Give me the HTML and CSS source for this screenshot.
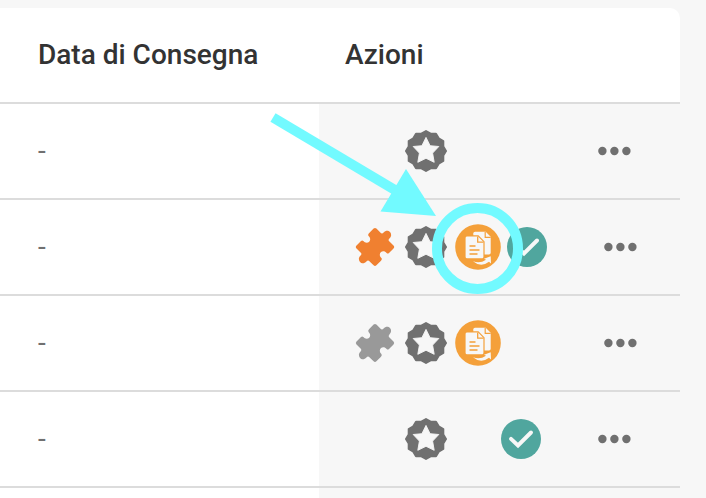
FILE: index.html
```html
<!DOCTYPE html>
<html lang="it">
<head>
<meta charset="utf-8">
<title>Consegne</title>
<link rel="stylesheet" href="styles.css">
</head>
<body>
<svg class="defs" aria-hidden="true">
  <symbol id="badge" viewBox="-21 -21 42 42">
    <path d="M20 0 17.3 4.6 17.3 10 12.7 12.7 10 17.3 4.6 17.3 0 20-4.6 17.3-10 17.3-12.7 12.7-17.3 10-17.3 4.6-20 0-17.3-4.6-17.3-10-12.7-12.7-10-17.3-4.6-17.3 0-20 4.6-17.3 10-17.3 12.7-12.7 17.3-10 17.3-4.6Z" fill="#707070" stroke="#707070" stroke-width="2" stroke-linejoin="round"/>
    <path d="M0-13.6 4.1-5.3 12.8-4.5 6.6 2.1 8.2 11.3 0 7.3-8.2 11.3-6.6 2.1-12.8-4.5-4.1-5.3Z" fill="#f7f7f7" stroke="#f7f7f7" stroke-width=".9" stroke-linejoin="round"/>
  </symbol>
  <symbol id="puzzle" viewBox="0 0 40 40">
    <path d="M18.6 1.600Q20 .2 21.400 1.600L25.600 5.800Q27 7.200 28.600 5.600C30.600 3.200 33.400 3.400 35 5.100S36.600 9.600 34.400 11.400Q32.900 12.900 34.200 14.200L38.500 18.600Q39.900 20 38.500 21.400L34 25.900Q32.700 27.100 31.600 25.900C30 23.800 27.300 23.800 25.800 25.200S24.500 29.400 26.400 31Q27.400 32.300 26 33.700L21.400 38.300Q20 39.700 18.600 38.300L14.400 34.200Q13 32.800 11.400 34.400C9.400 36.800 6.600 36.600 5 34.900S3.400 30.400 5.600 28.600Q7.100 27.100 5.800 25.800L1.500 21.400Q.1 20 1.500 18.600L6 14.100Q7.300 12.900 8.400 14.100C10 16.200 12.700 16.200 14.200 14.800S15.500 10.600 13.600 9Q12.600 7.700 14 6.300Z"/>
  </symbol>
  <symbol id="copy" viewBox="0 0 46 46">
    <circle cx="23" cy="23" r="22.800" fill="#f4a03a"/>
    <path d="M20 7.800H30.700L35.700 12.800V28.700Q35.700 30.500 34 30.500H20Q18.300 30.500 18.300 29V9.500Q18.300 7.800 20 7.800Z" fill="#f7f7f7"/>
    <path d="M30.200 8V13.400H35.700" fill="none" stroke="#f4a03a" stroke-width="1.200"/>
    <path d="M12 11.900H23.200L29 17.700V33Q29 34.900 27.200 34.900H12Q10 34.900 10 33V13.800Q10 11.900 12 11.900Z" fill="#f7f7f7" stroke="#f4a03a" stroke-width="1.200"/>
    <path d="M22.700 12.500V18.200H28.500M14.500 22H20.500M14.500 26H24.500M14.500 30H22.500" fill="none" stroke="#f4a03a" stroke-width="1.300"/>
    <path d="M18 37.300Q25 40 31 35.700L29 34.700 35.700 32.300 36 39.500 34 37.800Q26 44 18 37.300Z" fill="#f7f7f7"/>
  </symbol>
  <symbol id="check" viewBox="0 0 40 40">
    <circle cx="20" cy="20" r="20" fill="#50a69e"/>
    <path d="M10 19.800 17 26.500 30 13.500" fill="none" stroke="#f7f7f7" stroke-width="3.900" stroke-linecap="round" stroke-linejoin="miter"/>
  </symbol>
  <symbol id="dots" viewBox="0 0 34 10">
    <circle cx="5.400" cy="5" r="4.200"/><circle cx="17.400" cy="5" r="4.200"/><circle cx="29.400" cy="5" r="4.200"/>
  </symbol>
</svg>
<main class="table">
  <header class="row head"><div class="date">Data di Consegna</div><div class="actions-title">Azioni</div></header>
  <section class="row"><div class="date">-</div><div class="actions no-puzzle no-check"><svg class="badge"><use href="#badge"/></svg><svg class="dots"><use href="#dots"/></svg></div></section>
  <section class="row"><div class="date">-</div><div class="actions"><svg class="puzzle active"><use href="#puzzle"/></svg><svg class="badge"><use href="#badge"/></svg><svg class="copy"><use href="#copy"/></svg><svg class="check"><use href="#check"/></svg><svg class="dots"><use href="#dots"/></svg></div></section>
  <section class="row"><div class="date">-</div><div class="actions"><svg class="puzzle"><use href="#puzzle"/></svg><svg class="badge"><use href="#badge"/></svg><svg class="copy"><use href="#copy"/></svg><svg class="dots"><use href="#dots"/></svg></div></section>
  <section class="row"><div class="date">-</div><div class="actions no-puzzle no-copy"><svg class="badge"><use href="#badge"/></svg><svg class="check"><use href="#check"/></svg><svg class="dots"><use href="#dots"/></svg></div></section>
  <section class="row partial"><div class="date"></div><div class="actions"></div></section>
</main>
<svg class="callout" viewBox="0 0 706 498" aria-hidden="true">
  <path d="M273 117.500 400 193" fill="none" stroke="#72faff" stroke-width="10"/>
  <path d="M406 169 436 216 380.500 211.500Z" fill="#72faff"/>
  <circle cx="477.500" cy="248.500" r="40.500" fill="none" stroke="#72faff" stroke-width="10"/>
</svg>
</body>
</html>
```
FILE: styles.css
```css
body {
  margin: 0;
  height: 498px;
  padding-top: 8px;
  box-sizing: border-box;
  overflow: hidden;
  background: #f7f7f7;
  font-family: Roboto, sans-serif;
}
svg { display: block; flex: none; }
.defs { position: absolute; width: 0; height: 0; }
.table {
  width: 680px;
  background: #fff;
  border-radius: 0 10px 0 0;
}
.row {
  display: grid;
  grid-template-columns: 319px 361px;
  height: 96px;
  box-sizing: border-box;
  background: linear-gradient(#dcdcdc, #dcdcdc) bottom / 100% 2px no-repeat;
  padding-bottom: 2px;
}
.row.partial {
  height: 10px;
  padding-bottom: 0;
  background: none;
}
.date {
  display: flex;
  align-items: center;
  padding: 0 0 2px 38px;
  color: #707070;
  font-size: 28px;
}
.head .date, .actions-title {
  display: flex;
  align-items: center;
  color: #333;
  font-size: 28px;
  font-weight: 500;
}
.actions-title { padding: 0 0 2px 26px; }
.actions {
  display: grid;
  grid-template-columns: 40px 42px 46px 40px 34px;
  column-gap: 8px;
  padding-left: 36px;
  align-items: center;
  background: #f7f7f7;
}
.puzzle { grid-column: 1; width: 40px; height: 40px; fill: #999; }
.puzzle.active { fill: #f08030; }
.badge { grid-column: 2; width: 42px; height: 42px; margin-left: 2px; }
.copy { grid-column: 3; width: 46px; height: 46px; margin-left: 2px; }
.check { grid-column: 4; width: 40px; height: 40px; }
.no-copy .check { margin-left: -6px; }
.dots { grid-column: 5; width: 34px; height: 10px; margin-left: 48px; fill: #707070; }
.no-check .dots, .no-copy .dots { margin-left: 42px; }
.callout { position: absolute; inset: 0; width: 706px; height: 498px; pointer-events: none; }
```
